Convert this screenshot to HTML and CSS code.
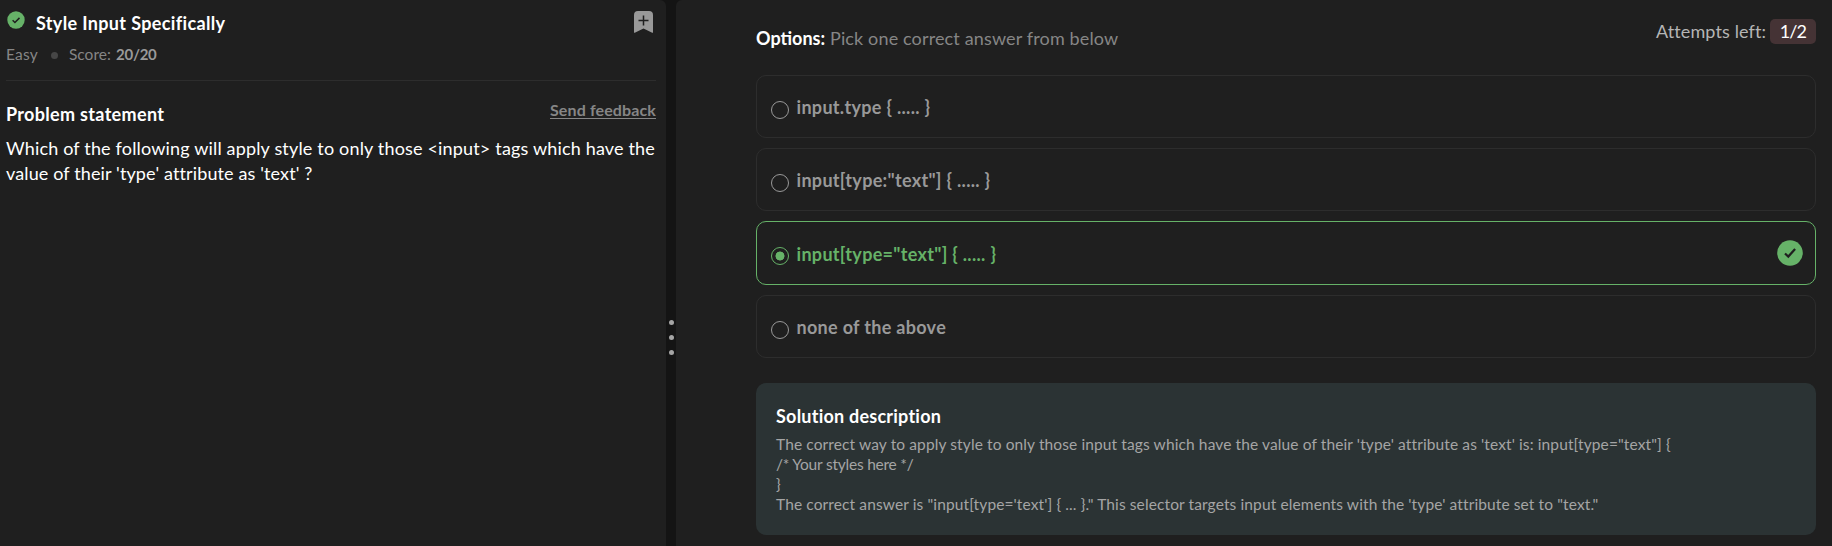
FILE: index.html
```
<!DOCTYPE html>
<html lang="en">
<head>
<meta charset="utf-8">
<title>Style Input Specifically</title>
<link rel="stylesheet" href="styles.css">
</head>
<body>
<div class="workspace">
  <section class="panel problem">
    <header class="problem-head">
      <div class="title-row">
        <svg class="status" viewBox="0 0 18 18"><circle cx="9" cy="9" r="8.7" fill="#66b268"/><path d="M5.6 9.3l2.3 2.2 4.6-4.6" fill="none" stroke="#1f1f1f" stroke-width="1.5"/></svg>
        <h1 class="title">Style Input Specifically</h1>
        <svg class="bookmark" viewBox="0 0 19 22"><path d="M4 0h11a4 4 0 0 1 4 4v17.2q0 .8-.8.5L9.500 17.600.8 21.700q-.8.3-.8-.5V4a4 4 0 0 1 4-4z" fill="#999"/><path d="M9.500 4.500v10M4.500 9.500h10" stroke="#1f1f1f" stroke-width="1.5"/></svg>
      </div>
      <div class="meta"><span class="level">Easy</span><span class="dot"></span><span class="score-label">Score:</span><b class="score">20/20</b></div>
    </header>
    <div class="statement-head">
      <h2 class="subtitle">Problem statement</h2>
      <a class="feedback">Send feedback</a>
    </div>
    <p class="statement">Which of the following will apply style to only those &lt;input&gt; tags which have the<br><span class="statement-end">value of their 'type' attribute as 'text' ?</span></p>
  </section>
  <div class="splitter"><i></i><i></i><i></i></div>
  <section class="panel answer">
    <div class="answer-head">
      <div class="prompt"><b class="prompt-label">Options:</b><span class="prompt-text">Pick one correct answer from below</span></div>
      <div class="attempts"><span class="attempts-label">Attempts left:</span><span class="badge">1/2</span></div>
    </div>
    <div class="options">
      <div class="option"><span class="radio"></span><span class="label">input.type { ..... }</span></div>
      <div class="option"><span class="radio"></span><span class="label">input[type:"text"] { ..... }</span></div>
      <div class="option selected"><span class="radio"></span><span class="label">input[type="text"] { ..... }</span>
        <svg class="correct" viewBox="0 0 26 26"><circle cx="13" cy="13" r="12.800" fill="#66b268"/><path d="M8 13.500l3.300 3.100 6.800-7.600" fill="none" stroke="#1f1f1f" stroke-width="2.200"/></svg>
      </div>
      <div class="option"><span class="radio"></span><span class="label">none of the above</span></div>
    </div>
    <div class="solution">
      <h2 class="solution-title">Solution description</h2>
      <p class="solution-text"><span class="line">The correct way to apply style to only those input tags which have the value of their 'type' attribute as 'text' is: input[type="text"] {</span><span class="line comment">/* Your styles here */</span><span class="line">}</span><span class="line">The correct answer is "input[type='text'] { ... }." This selector targets input elements with the 'type' attribute set to "text."</span></p>
    </div>
  </section>
</div>
</body>
</html>
```
FILE: styles.css
```
* { box-sizing: border-box; margin: 0; padding: 0; }
body { background: #141414; font-family: Lato, "Liberation Sans", sans-serif; font-size: 18px; color: #fff; height: 546px; overflow: hidden; white-space: nowrap; }
.workspace { display: grid; grid-template-columns: 666px 10px 1fr; height: 546px; }
.panel { background: #1f1f1f; }
.problem { padding: 10px 10px 0 6px; border-radius: 0 6px 0 0; }
.problem-head { height: 71px; border-bottom: 1px solid #2d2d2d; }
.title-row { display: flex; height: 24px; align-items: flex-start; }
.status { width: 18px; height: 18px; margin: 1px 11px 0 1px; }
.title { font-size: 18px; line-height: 26px; letter-spacing: .35px; }
.bookmark { width: 19px; height: 22px; margin: 1px 3px 0 auto; }
.meta { display: flex; align-items: center; height: 20px; margin-top: 10px; font-size: 15.5px; line-height: 20px; color: #868686; }
.level { letter-spacing: .2px; width: 45px; }
.dot { width: 7px; height: 7px; border-radius: 50%; background: #464646; margin: 2px 11px 0 0; }
.score-label { width: 47px; }
.score { font-size: 15px; letter-spacing: -.25px; color: #999; }
.statement-head { display: flex; justify-content: space-between; margin-top: 19px; height: 36px; }
.subtitle { font-size: 18px; line-height: 28px; letter-spacing: .32px; }
.feedback { font-size: 16px; font-weight: 700; line-height: 20px; letter-spacing: .12px; color: #868686; text-decoration: underline; text-decoration-thickness: 1px; text-underline-offset: 2px; }
.statement { line-height: 25px; letter-spacing: .17px; }
.statement-end { letter-spacing: .13px; }
.splitter { display: flex; flex-direction: column; align-items: center; gap: 10px; padding: 320px 0 0 1px; }
.splitter i { width: 5px; height: 5px; border-radius: 50%; background: #a5a5a5; }
.answer { padding: 19px 16px 0 80px; border-radius: 6px 0 0 0; }
.answer-head { display: flex; justify-content: space-between; height: 56px; }
.prompt { padding-top: 7px; line-height: 24px; }
.prompt-label { display: inline-block; width: 74px; }
.prompt-text { letter-spacing: .14px; color: #868686; }
.attempts { display: flex; line-height: 25px; color: #b5b5b5; }
.attempts-label { width: 114px; letter-spacing: .11px; }
.badge { width: 46px; height: 25px; border-radius: 5px; background: #453335; color: #fff; text-align: center; letter-spacing: -.9px; }
.options { display: grid; gap: 10px; }
.option { display: flex; height: 63px; border: 1px solid #2d2d2d; border-radius: 10px; padding: 0 12px 0 13.5px; color: #999; }
.radio { width: 18px; height: 18px; border: 1.5px solid #999; border-radius: 50%; margin-top: 24.500px; }
.label { font-weight: 700; line-height: 24px; letter-spacing: .31px; margin: 19px 0 0 8px; }
.selected { height: 64px; border-color: #66b268; color: #66b268; }
.selected .label { margin-top: 20px; }
.selected .radio { border-color: #66b268; background: radial-gradient(circle, #66b268 4.2px, transparent 4.800px); }
.correct { width: 26px; height: 26px; margin: 18px 0 0 auto; }
.solution { height: 152px; margin-top: 25px; padding: 20px; border-radius: 10px; background: #2b3334; }
.solution-title { font-size: 18px; line-height: 26px; letter-spacing: .23px; }
.solution-text { padding-top: 5px; font-size: 15.5px; line-height: 20px; letter-spacing: .115px; color: #a5a5a5; }
.line { display: block; }
.comment { letter-spacing: -.22px; }
```
